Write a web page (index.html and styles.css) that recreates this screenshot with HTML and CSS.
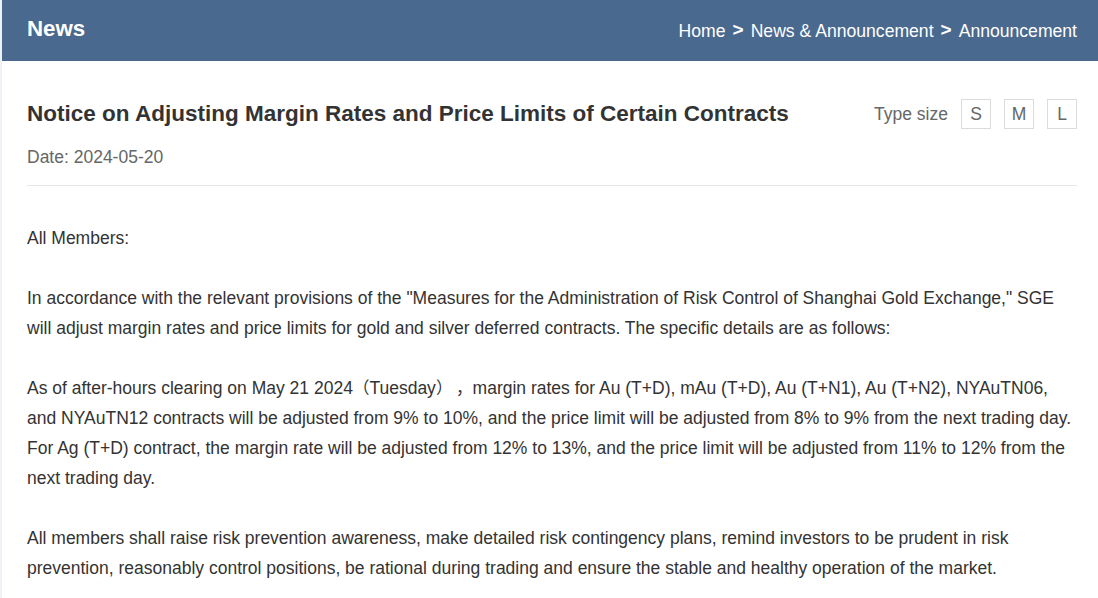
FILE: index.html
```html
<!DOCTYPE html>
<html lang="en">
<head>
<meta charset="utf-8">
<title>News</title>
<link rel="stylesheet" href="styles.css">
</head>
<body>
<div class="page">
  <header class="topbar">
    <div class="section-title">News</div>
    <nav class="crumbs">
      <a href="#">Home</a><span class="sep">&gt;</span><a href="#">News &amp; Announcement</a><span class="sep">&gt;</span><a href="#">Announcement</a>
    </nav>
  </header>
  <main class="article">
    <div class="article-head">
      <div class="head-left">
        <h1 class="title">Notice on Adjusting Margin Rates and Price Limits of Certain Contracts</h1>
        <div class="date">Date: 2024-05-20</div>
      </div>
      <div class="typesize">
        <span class="ts-label">Type size</span>
        <button class="ts-btn">S</button>
        <button class="ts-btn">M</button>
        <button class="ts-btn">L</button>
      </div>
    </div>
    <div class="content">
      <p>All Members:</p>
      <p>In accordance with the relevant provisions of the "Measures for the Administration of Risk Control of Shanghai Gold Exchange," SGE will adjust margin rates and price limits for gold and silver deferred contracts. The specific details are as follows:</p>
      <p>As of after-hours clearing on May 21 2024<span class="cjk">（</span>Tuesday<span class="cjk">） ，</span>margin rates for Au (T+D), mAu (T+D), Au (T+N1), Au (T+N2), NYAuTN06, and NYAuTN12 contracts will be adjusted from 9% to 10%, and the price limit will be adjusted from 8% to 9% from the next trading day. For Ag (T+D) contract, the margin rate will be adjusted from 12% to 13%, and the price limit will be adjusted from 11% to 12% from the next trading day.</p>
      <p>All members shall raise risk prevention awareness, make detailed risk contingency plans, remind investors to be prudent in risk prevention, reasonably control positions, be rational during trading and ensure the stable and healthy operation of the market.</p>
    </div>
  </main>
</div>
</body>
</html>
```

FILE: styles.css
```css
html, body {
  margin: 0;
  padding: 0;
}
body {
  background: #eef1f6;
  font-family: "Liberation Sans", Arial, "Noto Sans CJK SC", sans-serif;
  color: #333;
}
.page {
  margin-left: 2px;
  background: #fff;
  min-height: 598px;
}
.topbar {
  height: 61px;
  background: #4a698e;
  display: flex;
  align-items: center;
  justify-content: space-between;
  padding: 0 21px 0 25px;
  color: #fff;
}
.section-title {
  font-size: 22.3px;
  font-weight: bold;
  margin-top: -4px;
}
.crumbs {
  font-size: 17.6px;
  display: flex;
  align-items: center;
  margin-top: 2px;
}
.crumbs a {
  color: #fff;
  text-decoration: none;
}
.sep {
  font-size: 19px;
  font-weight: bold;
  margin: 0 7px;
  position: relative;
  top: -2px;
}
.article {
  padding: 0 21px 0 25px;
}
.article-head {
  display: flex;
  justify-content: space-between;
  align-items: flex-start;
  border-bottom: 1px solid #e6e6e6;
  padding-bottom: 18px;
  padding-top: 38px;
}
.title {
  margin: 0;
  font-size: 22.5px;
  font-weight: bold;
  color: #333;
  line-height: 30px;
}
.date {
  margin-top: 18px;
  font-size: 17.5px;
  color: #666;
  line-height: 20px;
}
.typesize {
  display: flex;
  align-items: center;
  gap: 13px;
}
.ts-label {
  font-size: 17.5px;
  color: #666;
}
.ts-btn {
  width: 30px;
  height: 30px;
  border: 1px solid #dcdcdc;
  background: #fff;
  color: #666;
  font-family: inherit;
  font-size: 17.5px;
  padding: 0;
}
.content {
  padding-top: 37px;
  font-size: 17.5px;
  line-height: 30px;
}
.content p {
  margin: 0 0 30px;
}
.cjk {
  font-family: "Noto Sans CJK SC", sans-serif;
  font-size: 16.5px;
  line-height: 1;
}
```
